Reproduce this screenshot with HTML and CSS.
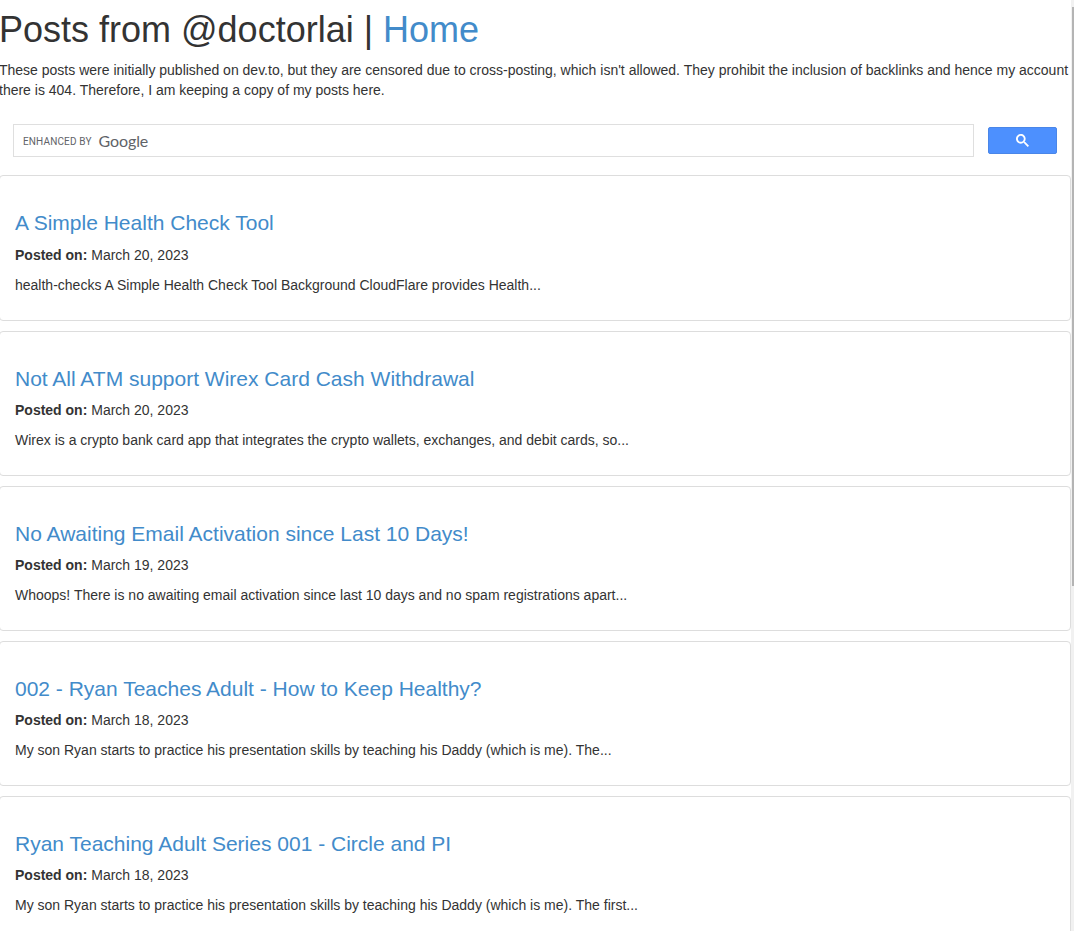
FILE: index.html
```html
<!DOCTYPE html>
<html lang="en">
<head>
<meta charset="utf-8">
<title>Posts from @doctorlai</title>
<link rel="stylesheet" href="styles.css">
</head>
<body>
<div class="page">
  <h1 class="title">Posts from @doctorlai | <a href="#">Home</a></h1>
  <p class="intro">These posts were initially published on dev.to, but they are censored due to cross-posting, which isn't allowed. They prohibit the inclusion of backlinks and hence my account there is 404. Therefore, I am keeping a copy of my posts here.</p>
  <form class="search">
    <div class="search-box">
      <span class="enhanced">ENHANCED BY</span>
      <span class="google">Google</span>
    </div>
    <button class="search-btn" type="button" aria-label="search">
      <svg width="13" height="13" viewBox="0 0 13 13"><path fill="#fff" d="m4.8495 7.8226c0.82666 0 1.5262-0.29146 2.0985-0.87438 0.57232-0.58292 0.86378-1.2877 0.87438-2.1144 0.010599-0.82666-0.28086-1.5262-0.87438-2.0985-0.59352-0.57232-1.293-0.86378-2.0985-0.87438-0.8055-0.010599-1.5103 0.28086-2.1144 0.87438-0.60414 0.59352-0.8956 1.293-0.87438 2.0985 0.021197 0.8055 0.31266 1.5103 0.87438 2.1144 0.56172 0.60414 1.2665 0.8956 2.1144 0.87438zm4.4695 0.2115 3.681 3.6819-1.259 1.284-3.6817-3.7 0.0019784-0.69479-0.090043-0.098846c-0.87973 0.76087-1.92 1.1413-3.1207 1.1413-1.3553 0-2.5025-0.46363-3.4417-1.3909s-1.4088-2.0686-1.4088-3.4239c0-1.3553 0.4696-2.4966 1.4088-3.4239 0.9392-0.92727 2.0864-1.3969 3.4417-1.4088 1.3553-0.011889 2.4906 0.45771 3.406 1.4088 0.9154 0.95107 1.379 2.0924 1.3909 3.4239 0 1.2126-0.38043 2.2588-1.1413 3.1385l0.098834 0.090049z"/></svg>
    </button>
  </form>
  <article class="panel">
    <h2 class="post-title"><a href="#">A Simple Health Check Tool</a></h2>
    <p class="meta"><b>Posted on:</b> March 20, 2023</p>
    <p class="excerpt">health-checks A Simple Health Check Tool Background CloudFlare provides Health...</p>
  </article>
  <article class="panel">
    <h2 class="post-title"><a href="#">Not All ATM support Wirex Card Cash Withdrawal</a></h2>
    <p class="meta"><b>Posted on:</b> March 20, 2023</p>
    <p class="excerpt">Wirex is a crypto bank card app that integrates the crypto wallets, exchanges, and debit cards, so...</p>
  </article>
  <article class="panel">
    <h2 class="post-title"><a href="#">No Awaiting Email Activation since Last 10 Days!</a></h2>
    <p class="meta"><b>Posted on:</b> March 19, 2023</p>
    <p class="excerpt">Whoops! There is no awaiting email activation since last 10 days and no spam registrations apart...</p>
  </article>
  <article class="panel">
    <h2 class="post-title"><a href="#">002 - Ryan Teaches Adult - How to Keep Healthy?</a></h2>
    <p class="meta"><b>Posted on:</b> March 18, 2023</p>
    <p class="excerpt">My son Ryan starts to practice his presentation skills by teaching his Daddy (which is me). The...</p>
  </article>
  <article class="panel">
    <h2 class="post-title"><a href="#">Ryan Teaching Adult Series 001 - Circle and PI</a></h2>
    <p class="meta"><b>Posted on:</b> March 18, 2023</p>
    <p class="excerpt">My son Ryan starts to practice his presentation skills by teaching his Daddy (which is me). The first...</p>
  </article>
</div>
<div class="scrollbar"><div class="thumb"></div></div>
</body>
</html>
```
FILE: styles.css
```css
html, body {
  margin: 0;
  height: 931px;
  overflow: hidden;
  background: #fff;
}
body {
  font-family: "Liberation Sans", Arial, sans-serif;
  font-size: 14px;
  line-height: 20px;
  color: #333;
}
a {
  color: #428bca;
  text-decoration: none;
}
.page {
  width: 1072px;
  margin-left: -1px;
}
.title {
  margin: 10px 0 10px;
  font-size: 36px;
  line-height: 1.1;
  font-weight: 400;
}
.intro {
  margin: 0 0 10px;
}
.search {
  display: flex;
  align-items: center;
  gap: 14px;
  padding: 14px 14px 18.85px 14px;
}
.search-box {
  flex: 1;
  height: 33px;
  box-sizing: border-box;
  display: flex;
  align-items: center;
  padding-left: 9px;
  border: 1px solid #dfdfdf;
  background: #fff;
}
.enhanced {
  padding-top: 3px;
  font-family: "Roboto", "Liberation Sans", sans-serif;
  font-size: 10px;
  letter-spacing: 0.15px;
  color: #5f6368;
}
.google {
  margin-left: 7px;
  padding-top: 1px;
  font-family: "Lato", "Open Sans", sans-serif;
  font-size: 16px;
  font-weight: 400;
  letter-spacing: -0.1px;
  color: #5f6368;
}
.search-btn {
  width: 69px;
  height: 27px;
  padding: 0;
  display: flex;
  align-items: center;
  justify-content: center;
  background: #4d90fe;
  border: 1px solid #4a86e8;
  border-radius: 2px;
}
.panel {
  margin-bottom: 10px;
  padding: 15px;
  border: 1px solid #ddd;
  border-radius: 4px;
}
.post-title {
  margin: 20px 0 10px;
  font-size: 21px;
  line-height: 1.1;
  font-weight: 400;
}
.meta {
  margin: 0 0 10px;
}
.excerpt {
  margin: 0 0 10px;
}
.scrollbar {
  position: absolute;
  top: 0;
  right: 0;
  width: 3px;
  height: 931px;
  box-sizing: border-box;
  padding: 7px 0 0 1px;
  background: #f1f1f1;
}
.thumb {
  height: 579px;
  background: #b4b4b4;
}
```
